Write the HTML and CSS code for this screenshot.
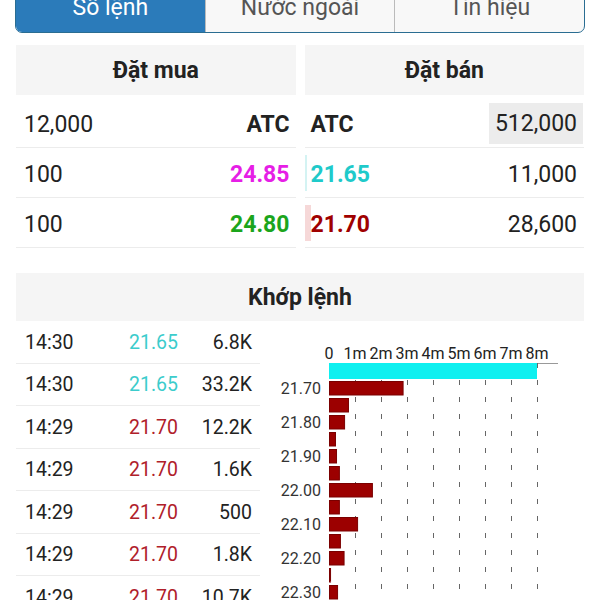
FILE: index.html
```html
<!DOCTYPE html>
<html lang="vi">
<head>
    <meta charset="UTF-8">
    <meta name="viewport" content="width=device-width, initial-scale=1.0">
    <title>Sổ lệnh</title>
    <link rel="stylesheet" href="styles.css">
</head>
<body>
    <div class="page">
        <!-- Tabs -->
        <div class="tabs">
            <div class="tab active">Sổ lệnh</div>
            <div class="tab">Nước ngoài</div>
            <div class="tab">Tín hiệu</div>
        </div>

        <!-- Sổ lệnh: đặt mua / đặt bán -->
        <div class="book">
            <div class="book-col">
                <div class="section-header">Đặt mua</div>
                <div class="book-row">
                    <span>12,000</span>
                    <span class="bold">ATC</span>
                </div>
                <div class="book-row">
                    <span>100</span>
                    <span class="bold ceil">24.85</span>
                </div>
                <div class="book-row">
                    <span>100</span>
                    <span class="bold up">24.80</span>
                </div>
            </div>
            <div class="book-col sell">
                <div class="section-header">Đặt bán</div>
                <div class="book-row">
                    <span class="bold">ATC</span>
                    <span class="highlight">512,000</span>
                </div>
                <div class="book-row">
                    <span class="vol-bar floor-bar" style="width: 2px"></span>
                    <span class="bold floor">21.65</span>
                    <span>11,000</span>
                </div>
                <div class="book-row">
                    <span class="vol-bar down-bar" style="width: 6px"></span>
                    <span class="bold down">21.70</span>
                    <span>28,600</span>
                </div>
            </div>
        </div>

        <!-- Khớp lệnh -->
        <div class="section-header match-header">Khớp lệnh</div>
        <div class="match">
            <div class="trades">
                <div class="trade"><span class="t-time">14:30</span><span class="t-price floor">21.65</span><span class="t-vol">6.8K</span></div>
                <div class="trade"><span class="t-time">14:30</span><span class="t-price floor">21.65</span><span class="t-vol">33.2K</span></div>
                <div class="trade"><span class="t-time">14:29</span><span class="t-price down">21.70</span><span class="t-vol">12.2K</span></div>
                <div class="trade"><span class="t-time">14:29</span><span class="t-price down">21.70</span><span class="t-vol">1.6K</span></div>
                <div class="trade"><span class="t-time">14:29</span><span class="t-price down">21.70</span><span class="t-vol">500</span></div>
                <div class="trade"><span class="t-time">14:29</span><span class="t-price down">21.70</span><span class="t-vol">1.8K</span></div>
                <div class="trade"><span class="t-time">14:29</span><span class="t-price down">21.70</span><span class="t-vol">10.7K</span></div>
            </div>
            <div class="chart">
                <svg id="chart" width="324" height="280" viewBox="0 0 324 280"></svg>
            </div>
        </div>
    </div>

    <script>
        // khối lượng khớp theo giá (đơn vị: triệu)
        const levels = [
            { price: '21.65', vol: 8.0 },
            { price: '21.70', vol: 2.83 },
            { price: '21.75', vol: 0.73 },
            { price: '21.80', vol: 0.58 },
            { price: '21.85', vol: 0.23 },
            { price: '21.90', vol: 0.27 },
            { price: '21.95', vol: 0.38 },
            { price: '22.00', vol: 1.65 },
            { price: '22.05', vol: 0.38 },
            { price: '22.10', vol: 1.08 },
            { price: '22.15', vol: 0.42 },
            { price: '22.20', vol: 0.56 },
            { price: '22.25', vol: 0.04 },
            { price: '22.30', vol: 0.31 }
        ];

        const svg = document.getElementById('chart');
        const ns = 'http://www.w3.org/2000/svg';
        const x0 = 69;
        const step = 26;
        const axisY = 42;

        function el(tag, attrs, text) {
            const node = document.createElementNS(ns, tag);
            for (const k in attrs) node.setAttribute(k, attrs[k]);
            if (text) node.textContent = text;
            svg.appendChild(node);
            return node;
        }

        // trục trên
        for (let i = 0; i <= 8; i++) {
            el('text', { x: x0 + i * step, y: 38, class: 'axis-label', 'text-anchor': 'middle' }, i === 0 ? '0' : i + 'm');
        }
        el('line', { x1: x0, y1: axisY + 0.5, x2: 298, y2: axisY + 0.5, class: 'axis-line' });

        // lưới nét đứt
        for (let i = 1; i <= 8; i++) {
            const x = x0 + i * step + 0.5;
            el('line', { x1: x, y1: axisY, x2: x, y2: 280, class: 'grid-line' });
        }

        // cột
        levels.forEach((lv, i) => {
            const w = Math.max(lv.vol * step, 1);
            if (i === 0) {
                el('rect', { x: x0, y: axisY, width: w, height: 16, class: 'bar-cyan' });
                return;
            }
            const y = 60 + (i - 1) * 17;
            el('rect', { x: x0 + 0.5, y: y + 0.5, width: w, height: 13.5, class: 'bar-red' });
            if ((i - 1) % 2 === 0) {
                el('text', { x: 61, y: y + 12.7, class: 'price-label', 'text-anchor': 'end' }, lv.price);
            }
        });
    </script>
</body>
</html>
```

FILE: styles.css
```css
/* chung */
body {
    margin: 0;
    font-family: 'Roboto', 'Noto Sans', sans-serif;
    color: #222;
    background: #fff;
    height: 600px;
    overflow: hidden;
}

.page {
    margin: 0 16px;
}

/* tabs */
.tabs {
    display: flex;
    margin: -20px -1px 0;
    border: 1px solid #2a6d92;
    border-radius: 0 0 7px 7px;
    overflow: hidden;
    background: #f8f8f8;
}

.tab {
    flex: 1;
    text-align: center;
    font-size: 23px;
    line-height: 23px;
    padding: 15px 0 13px;
    color: #555;
    border-left: 1px solid #bbb;
}

.tab:first-child {
    border-left: none;
}

.tab.active {
    background: #2b7bba;
    color: #fff;
}

/* tiêu đề */
.section-header {
    background: #f5f5f5;
    height: 50px;
    line-height: 51px;
    text-align: center;
    font-weight: bold;
    font-size: 23px;
    color: #222;
}

/* sổ lệnh */
.book {
    display: flex;
    gap: 9px;
    margin-top: 12px;
}

.book-col {
    flex: 1;
}

.book-col .section-header {
    margin-bottom: 3px;
}

.book-row {
    position: relative;
    display: flex;
    justify-content: space-between;
    align-items: center;
    height: 45px;
    border-bottom: 1px solid #ececec;
    padding: 4px 6px 0 8px;
    font-size: 23px;
}

.book-col.sell .book-row {
    padding: 4px 7px 0 6px;
}

.book-row span {
    position: relative;
}

.book-row .bold {
    font-weight: bold;
}

.book-row .highlight {
    background: #ececec;
    line-height: 41px;
    padding: 0 6px;
    margin: -3px -6px 0 0;
}

.vol-bar {
    position: absolute !important;
    left: 0;
    top: 7px;
    bottom: 6px;
}

.floor-bar {
    background: #d4f3f3;
}

.down-bar {
    background: #f6d8d8;
}

.ceil {
    color: #e61ee6;
}

.up {
    color: #1ca51c;
}

.book-row .floor {
    color: #1fcaca;
}

.book-row .down {
    color: #a00000;
}

/* khớp lệnh */
.match-header {
    margin-top: 25px;
    height: 48px;
    line-height: 49px;
}

.match {
    display: flex;
}

.trades {
    width: 244px;
}

.trade {
    display: flex;
    align-items: center;
    height: 40.5px;
    padding-top: 1px;
    border-bottom: 1px solid #ececec;
    font-size: 19.5px;
}

.t-time {
    width: 104px;
    padding-left: 9px;
}

.t-price {
    flex: 1;
}

.t-vol {
    padding-right: 8px;
}

.trade .floor {
    color: #3ccccc;
}

.trade .down {
    color: #b0202a;
}

/* biểu đồ */
.chart {
    flex: 1;
}

.chart svg {
    display: block;
}

.axis-label {
    font-family: 'Roboto', sans-serif;
    font-size: 16px;
    fill: #222;
}

.price-label {
    font-family: 'Roboto', sans-serif;
    font-size: 16px;
    fill: #333;
}

.axis-line {
    stroke: #999;
    stroke-width: 1;
}

.grid-line {
    stroke: #666;
    stroke-width: 1;
    stroke-dasharray: 5 12;
}

.bar-cyan {
    fill: #0ff0f0;
}

.bar-red {
    fill: #9c0000;
    stroke: #7a0000;
    stroke-width: 1;
}
```
